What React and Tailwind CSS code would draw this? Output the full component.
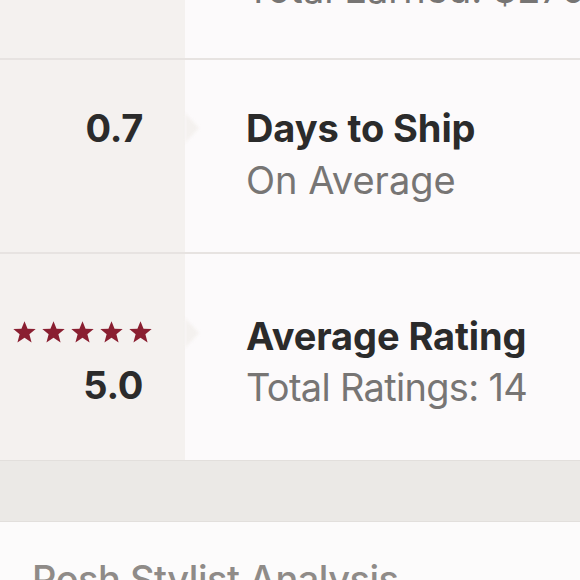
function StarIcon() {
  return (
    <svg width="23" height="22" viewBox="0 0 24 23" fill="currentColor">
      <polygon points="12,0.3 15.2,8 23.7,8.4 17.1,13.8 19.4,22.4 12,17.6 4.6,22.4 6.9,13.8 0.3,8.4 8.8,8" />
    </svg>
  );
}

function Pointer({ top }) {
  return (
    <div
      className={`absolute right-[-14px] ${top} w-0 h-0 border-y-[15px] border-y-transparent border-l-[14px] border-l-[#f4f1ef] blur-[1.5px]`}
    />
  );
}

export default function App() {
  return (
    <div className="h-[580px] w-[580px] overflow-hidden bg-[#fcfbfb] font-['Inter',sans-serif]">
      <div className="mt-[-58px]">
        {/* Total earned (mostly scrolled off) */}
        <div className="flex h-[118px] border-b-2 border-[#e7e3e1]">
          <div className="w-[185px] shrink-0 bg-[#f4f1ef]" />
          <div className="flex-1 bg-[#fcfafb] pl-[61px] pt-[25px] text-[38px] leading-[44px] text-[#777574] whitespace-nowrap">
            Total Earned: $270
          </div>
        </div>

        {/* Days to ship */}
        <div className="flex h-[194px] border-b-2 border-[#e7e3e1]">
          <div className="relative w-[185px] shrink-0 bg-[#f4f1ef] flex flex-col items-end pt-[46px] pr-[42px]">
            <div className="text-[38px] font-bold text-[#2b2b2b] leading-[44px] tracking-[-0.3px]">0.7</div>
            <Pointer top="top-[53px]" />
          </div>
          <div className="flex-1 bg-[#fcfafb] pl-[61px] pt-[46px]">
            <div className="text-[38px] leading-[44px] font-bold text-[#2b2b2b] tracking-[-0.1px]">Days to Ship</div>
            <div className="text-[38px] leading-[44px] text-[#777574] mt-[8px]">On Average</div>
          </div>
        </div>

        {/* Average rating */}
        <div className="flex h-[206px]">
          <div className="relative w-[185px] shrink-0 bg-[#f4f1ef] flex flex-col items-end pt-[67px] pr-[33px]">
            <div className="flex gap-[6px] text-[#8a1f31]">
              <StarIcon />
              <StarIcon />
              <StarIcon />
              <StarIcon />
              <StarIcon />
            </div>
            <div className="text-[38px] font-bold text-[#2b2b2b] leading-[44px] mt-[20px] mr-[9px] tracking-[-0.3px]">5.0</div>
            <Pointer top="top-[64px]" />
          </div>
          <div className="flex-1 bg-[#fcfafb] pl-[61px] pt-[60px]">
            <div className="text-[38px] leading-[44px] font-bold text-[#2b2b2b] tracking-[-0.1px]">Average Rating</div>
            <div className="text-[38px] leading-[44px] text-[#777574] mt-[7px] tracking-[-0.7px]">Total Ratings: 14</div>
          </div>
        </div>

        <div className="h-[62px] bg-[#ebe9e6] border-y border-[#e2dfdc]" />
        <div className="pt-[35px] pl-[32px] text-[38px] leading-[44px] font-medium text-[#8f8b88] whitespace-nowrap tracking-[-0.5px]">
          Posh Stylist Analysis
        </div>
      </div>
    </div>
  );
}
